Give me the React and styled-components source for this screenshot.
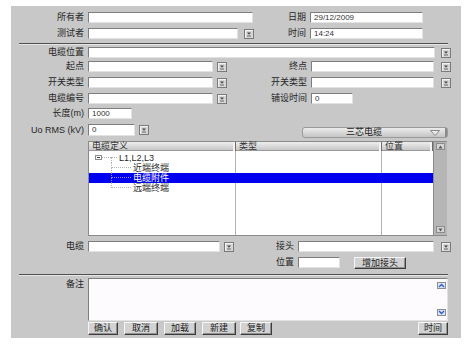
import React from 'react';
import styled, { createGlobalStyle } from 'styled-components';

const Global = createGlobalStyle`
  html, body { margin: 0; padding: 0; background: #fff; }
  body { font-family: "Liberation Sans", "Noto Sans CJK SC", sans-serif; }
`;

const Panel = styled.div`
  margin: 6px 0 0 11px;
  width: 450px;
  height: 332px;
  box-sizing: border-box;
  padding-top: 6px;
  background: #c8c8c8;
  display: flex;
  flex-direction: column;
  font-size: 9px;
  color: #222;
`;

const Row = styled.div`
  display: flex;
  align-items: ${p => (p.top ? 'flex-start' : 'center')};
  height: ${p => p.h || 11}px;
  margin-top: ${p => p.mt || 0}px;
  flex: none;
`;

const Label = styled.div`
  width: ${p => p.w}px;
  flex: none;
  box-sizing: border-box;
  padding-right: 4px;
  text-align: right;
  white-space: nowrap;
  line-height: 11px;
  color: #262626;
  margin-top: ${p => p.mt || 0}px;
`;

const Field = styled.div`
  width: ${p => p.w}px;
  height: ${p => p.h || 11}px;
  flex: none;
  box-sizing: border-box;
  background: #fff;
  border: 1px solid;
  border-color: #7e7e7e #e2e2e2 #e2e2e2 #7e7e7e;
  padding-left: 3px;
  font-size: 8px;
  line-height: ${p => (p.h || 11) - 2}px;
  color: #333;
  white-space: nowrap;
  overflow: hidden;
`;

const DropBtn = styled.div`
  width: 10px;
  height: 10px;
  flex: none;
  margin-left: ${p => p.ml}px;
  margin-top: ${p => p.mt || 0}px;
  box-sizing: border-box;
  border: 1px solid #7a7a7a;
  background: #d6d6d6;
  box-shadow: inset 1px 1px 0 #f2f2f2;
  display: flex;
  align-items: center;
  justify-content: center;
`;

const Rule = styled.div`
  margin: ${p => p.mt}px 0 0 8px;
  width: 429px;
  height: 0;
  flex: none;
  border-top: 1px solid #505050;
  border-bottom: 1px solid #e6e6e6;
`;

const Segment = styled.div`
  margin-left: ${p => p.ml}px;
  margin-top: 3px;
  width: ${p => p.w}px;
  height: 11px;
  flex: none;
  box-sizing: border-box;
  border: 1px solid #9a9a9a;
  border-radius: 3px;
  background: linear-gradient(#ececec, #c4c4c4);
  display: flex;
  align-items: center;
  font-size: 9px;
  line-height: 9px;
`;

const SegText = styled.span`
  flex: 1;
  text-align: center;
  color: #222;
`;

const SegArrow = styled.span`
  width: 20px;
  height: 100%;
  border-right: 2px solid #8a8a8a;
  display: flex;
  align-items: center;
  justify-content: center;
`;

const Table = styled.div`
  margin: 5px 0 0 77px;
  width: 359px;
  height: 95px;
  flex: none;
  box-sizing: border-box;
  border: 1px solid #8a8a8a;
  display: flex;
  background: #fff;
`;

const TableMain = styled.div`
  flex: 1;
  display: flex;
  flex-direction: column;
`;

const Header = styled.div`
  display: flex;
  height: 9px;
  flex: none;
`;

const HeadCell = styled.div`
  width: ${p => p.w}px;
  box-sizing: border-box;
  padding-left: 3px;
  background: linear-gradient(#eeeeee, #c2c2c2);
  border-right: 1px solid #6e6e6e;
  box-shadow: inset -2px 0 0 #f4f4f4, inset 0 -1px 0 #9a9a9a;
  line-height: 9px;
  font-size: 9px;
  color: #333;
  white-space: nowrap;
`;

const Body = styled.div`
  flex: 1;
  padding-top: 2px;
  background:
    linear-gradient(90deg, transparent 146px, #b4b4b4 146px, #b4b4b4 147px, transparent 147px,
      transparent 292px, #b4b4b4 292px, #b4b4b4 293px, transparent 293px);
`;

const TreeRow = styled.div`
  display: flex;
  align-items: stretch;
  height: 10px;
  line-height: 10px;
  background: ${p => (p.sel ? '#0000f0' : 'transparent')};
  color: ${p => (p.sel ? '#fff' : '#2a2a2a')};
`;

const Toggle = styled.span`
  width: 7px;
  height: 5px;
  margin: 2px 0 0 6px;
  box-sizing: border-box;
  border: 1px solid #8c8c8c;
  display: flex;
  align-items: center;
  justify-content: center;
  &::after {
    content: '';
    width: 3px;
    height: 1px;
    background: #444;
  }
`;

const Joint = styled.span`
  width: ${p => p.w}px;
  margin-left: ${p => p.ml || 0}px;
  display: flex;
  flex-direction: column;
  flex: none;
`;

const Half = styled.span`
  height: 5px;
  box-sizing: border-box;
  border-left: ${p => (p.left ? `1px dotted ${p.c}` : 'none')};
  border-bottom: ${p => (p.bottom ? `1px dotted ${p.c}` : 'none')};
`;

const TreeText = styled.span`
  margin-left: ${p => p.ml}px;
  white-space: nowrap;
  font-size: 9px;
`;

const ScrollCol = styled.div`
  width: 14px;
  flex: none;
  background: #b6b6b6;
  border-left: 1px solid #8a8a8a;
  display: flex;
  flex-direction: column;
  justify-content: space-between;
  align-items: center;
  padding: 1px 0 2px;
  box-sizing: border-box;
`;

const ArrowBox = styled.div`
  width: 9px;
  height: 7px;
  box-sizing: border-box;
  border: 1px solid #8c8c8c;
  background: ${p => p.bg || '#d4d4d4'};
  display: flex;
  align-items: center;
  justify-content: center;
`;

const PushBtn = styled.div`
  width: ${p => p.w}px;
  height: ${p => p.h || 13}px;
  margin-left: ${p => p.ml || 0}px;
  margin-right: ${p => p.mr || 0}px;
  flex: none;
  box-sizing: border-box;
  border: 1px solid;
  border-color: #f6f6f6 #3c3c3c #3c3c3c #f6f6f6;
  box-shadow: inset -1px -1px 0 #909090;
  background: #d2d2d2;
  text-align: center;
  line-height: ${p => (p.h || 13) - 2}px;
  font-size: 9px;
  color: #1e1e1e;
  white-space: nowrap;
`;

const Notes = styled.div`
  width: 360px;
  height: 43px;
  flex: none;
  box-sizing: border-box;
  background: #fdfbfe;
  border: 1px solid;
  border-color: #7e7e7e #e2e2e2 #e2e2e2 #7e7e7e;
  display: flex;
  justify-content: flex-end;
`;

const NoteScroll = styled.div`
  width: 12px;
  display: flex;
  flex-direction: column;
  justify-content: space-between;
  align-items: center;
  padding: 3px 0 4px;
  box-sizing: border-box;
`;

const Spacer = styled.div`
  flex: 1;
`;

const Caret = ({ up, color = '#333' }) => (
  <svg width="5" height="4" viewBox="0 0 5 4">
    <path d={up ? 'M0.5 3.5 L2.5 0.5 L4.5 3.5 Z' : 'M0.5 0.5 L4.5 0.5 L2.5 3.5 Z'} fill={color} />
  </svg>
);

const Drop = ({ ml, mt }) => (
  <DropBtn ml={ml} mt={mt}>
    <svg width="6" height="6" viewBox="0 0 6 6">
      <path d="M1 1.5 L5 1.5 L3 3.8 Z" fill="#444" />
      <path d="M1 5 L5 5" stroke="#666" strokeWidth="1" />
    </svg>
  </DropBtn>
);

const Chevron = ({ up }) => (
  <svg width="7" height="5" viewBox="0 0 7 5">
    <path d={up ? 'M1 4 L3.5 1.5 L6 4' : 'M1 1 L3.5 3.5 L6 1'} stroke="#2a5ad0" strokeWidth="1.3" fill="none" />
  </svg>
);

const lineColor = '#b2b2b2';

export default function App() {
  return (
    <>
      <Global />
      <Panel>
        <Row>
          <Label w={77}>所有者</Label>
          <Field w={165} />
          <Label w={57}>日期</Label>
          <Field w={113}>29/12/2009</Field>
        </Row>
        <Row mt={5}>
          <Label w={77}>测试者</Label>
          <Field w={150} />
          <Drop ml={6} />
          <Label w={56}>时间</Label>
          <Field w={113}>14:24</Field>
        </Row>
        <Rule mt={4} />
        <Row mt={2}>
          <Label w={77}>电缆位置</Label>
          <Field w={347} />
          <Drop ml={6} />
        </Row>
        <Row mt={3}>
          <Label w={77}>起点</Label>
          <Field w={125} />
          <Drop ml={4} />
          <Label w={84}>终点</Label>
          <Field w={123} />
          <Drop ml={7} />
        </Row>
        <Row mt={5}>
          <Label w={77}>开关类型</Label>
          <Field w={125} />
          <Drop ml={4} />
          <Label w={84}>开关类型</Label>
          <Field w={123} />
          <Drop ml={7} />
        </Row>
        <Row mt={5}>
          <Label w={77}>电缆编号</Label>
          <Field w={125} />
          <Drop ml={4} />
          <Label w={84}>铺设时间</Label>
          <Field w={42}>0</Field>
        </Row>
        <Row mt={4}>
          <Label w={77}>长度(m)</Label>
          <Field w={44}>1000</Field>
        </Row>
        <Row mt={5} h={12} top>
          <Label w={77} mt={1}>Uo RMS (kV)</Label>
          <Field w={47} h={12}>0</Field>
          <Drop ml={4} mt={1} />
          <Segment ml={153} w={146}>
            <SegText>三芯电缆</SegText>
            <SegArrow>
              <svg width="10" height="6" viewBox="0 0 10 6">
                <path d="M0.5 0.5 L9.5 0.5 L5 5.5 Z" fill="#e8e8e8" stroke="#8a8a8a" strokeWidth="1" />
              </svg>
            </SegArrow>
          </Segment>
        </Row>
        <Table>
          <TableMain>
            <Header>
              <HeadCell w={147}>电缆定义</HeadCell>
              <HeadCell w={146}>类型</HeadCell>
              <HeadCell w={51}>位置</HeadCell>
            </Header>
            <Body>
              <TreeRow>
                <Toggle />
                <Joint w={9}>
                  <Half bottom c={lineColor} />
                  <Half />
                </Joint>
                <Joint w={6}>
                  <Half bottom c={lineColor} />
                  <Half left c={lineColor} />
                </Joint>
                <TreeText ml={2}>L1,L2,L3</TreeText>
              </TreeRow>
              <TreeRow>
                <Joint w={20} ml={22}>
                  <Half left bottom c={lineColor} />
                  <Half left c={lineColor} />
                </Joint>
                <TreeText ml={2}>近端终端</TreeText>
              </TreeRow>
              <TreeRow sel>
                <Joint w={20} ml={22}>
                  <Half left bottom c="#8c8cff" />
                  <Half left c="#8c8cff" />
                </Joint>
                <TreeText ml={2}>电缆附件</TreeText>
              </TreeRow>
              <TreeRow>
                <Joint w={20} ml={22}>
                  <Half left bottom c={lineColor} />
                  <Half />
                </Joint>
                <TreeText ml={2}>远端终端</TreeText>
              </TreeRow>
            </Body>
          </TableMain>
          <ScrollCol>
            <ArrowBox>
              <Caret up color="#555" />
            </ArrowBox>
            <ArrowBox>
              <Caret color="#555" />
            </ArrowBox>
          </ScrollCol>
        </Table>
        <Row mt={5}>
          <Label w={77}>电缆</Label>
          <Field w={132} />
          <Drop ml={4} />
          <Label w={64}>接头</Label>
          <Field w={136} />
          <Drop ml={7} />
        </Row>
        <Row mt={5}>
          <Label w={287}>位置</Label>
          <Field w={42} />
          <PushBtn ml={14} w={52} h={12}>增加接头</PushBtn>
        </Row>
        <Rule mt={6} />
        <Row mt={2} h={43} top>
          <Label w={77} mt={1}>备注</Label>
          <Notes>
            <NoteScroll>
              <ArrowBox bg="#dbe6fa">
                <Chevron up />
              </ArrowBox>
              <ArrowBox bg="#dbe6fa">
                <Chevron />
              </ArrowBox>
            </NoteScroll>
          </Notes>
        </Row>
        <Row mt={1} h={13}>
          <PushBtn ml={77} w={30}>确认</PushBtn>
          <PushBtn ml={6} w={34}>取消</PushBtn>
          <PushBtn ml={6} w={32}>加载</PushBtn>
          <PushBtn ml={6} w={34}>新建</PushBtn>
          <PushBtn ml={4} w={32}>复制</PushBtn>
          <Spacer />
          <PushBtn w={30} mr={13}>时间</PushBtn>
        </Row>
      </Panel>
    </>
  );
}
